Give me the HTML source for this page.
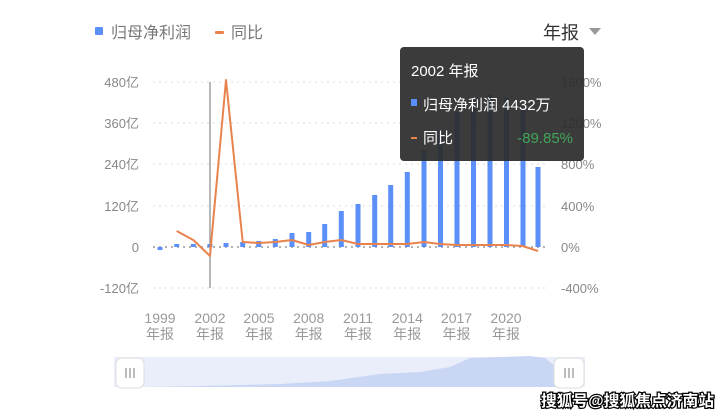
<!DOCTYPE html>
<html><head><meta charset="utf-8"><style>
body{margin:0;width:724px;height:414px;background:#fff;overflow:hidden;font-family:"Liberation Sans","Noto Sans CJK SC",sans-serif;}
svg{position:absolute;left:0;top:0}
</style></head><body>
<svg width="724" height="414" viewBox="0 0 724 414" font-family="Liberation Sans, Noto Sans CJK SC, sans-serif">
<rect x="95" y="27" width="8" height="8" fill="#5b8ff9" rx="1"/>
<text x="111" y="38" font-size="16" fill="#777">归母净利润</text>
<rect x="215" y="31" width="9" height="3" fill="#e8834e" rx="1"/>
<text x="231" y="38" font-size="16" fill="#777">同比</text>
<text x="543" y="39" font-size="18" fill="#333">年报</text>
<path d="M589 28 L601 28 L595 35 Z" fill="#999"/>
<g stroke="#ddd" stroke-dasharray="2,4" stroke-width="1">
<line x1="153" y1="82" x2="548" y2="82"/>
<line x1="153" y1="123" x2="548" y2="123"/>
<line x1="153" y1="164" x2="548" y2="164"/>
<line x1="153" y1="206" x2="548" y2="206"/>
<line x1="153" y1="288" x2="548" y2="288"/>
</g>
<line x1="153" y1="247" x2="548" y2="247" stroke="#999" stroke-dasharray="2,4" stroke-width="1.5"/>
<g font-size="13" fill="#888" text-anchor="end">
<text x="139" y="87">480亿</text><text x="139" y="128">360亿</text><text x="139" y="169">240亿</text>
<text x="139" y="211">120亿</text><text x="139" y="252">0</text><text x="139" y="293">-120亿</text>
</g>
<g font-size="13" fill="#888">
<text x="561" y="87">1600%</text><text x="561" y="128">1200%</text><text x="561" y="169">800%</text>
<text x="561" y="211">400%</text><text x="561" y="252">0%</text><text x="561" y="293">-400%</text>
</g>
<g fill="#5b8ff9">
<rect x="157.5" y="247" width="5" height="3"/>
<rect x="174.2" y="244" width="5" height="3"/>
<rect x="190.8" y="244" width="5" height="3"/>
<rect x="207.5" y="244" width="5" height="3"/>
<rect x="223.5" y="243" width="5" height="4"/>
<rect x="240.2" y="242" width="5" height="5"/>
<rect x="256.2" y="241" width="5" height="6"/>
<rect x="272.8" y="239" width="5" height="8"/>
<rect x="289.5" y="233" width="5" height="14"/>
<rect x="306.2" y="232" width="5" height="15"/>
<rect x="322.2" y="224" width="5" height="23"/>
<rect x="338.8" y="211" width="5" height="36"/>
<rect x="355.5" y="204" width="5" height="43"/>
<rect x="372.2" y="195" width="5" height="52"/>
<rect x="388.2" y="185" width="5" height="62"/>
<rect x="404.8" y="172" width="5" height="75"/>
<rect x="421.5" y="150" width="5" height="97"/>
<rect x="438" y="130" width="5" height="117"/>
<rect x="454.5" y="112" width="5" height="135"/>
<rect x="471" y="100" width="5" height="147"/>
<rect x="487.5" y="95" width="5" height="152"/>
<rect x="504" y="98" width="5" height="149"/>
<rect x="520.5" y="110" width="5" height="137"/>
<rect x="535.5" y="167" width="5" height="80"/>
</g>
<line x1="210" y1="82" x2="210" y2="288" stroke="#888" stroke-width="1.2"/>
<polyline fill="none" stroke="#e8834e" stroke-width="2" stroke-linejoin="round" points="176.7,231 193.3,240 210,256 226,80 242.7,242 258.7,243 275.3,242 292,240 308.7,245 324.7,242 341.3,240 358,244 374.7,244 390.7,244 407.3,244 424,242 440,244 456.5,245 473,245 489.5,245 506,245 522.5,246 538,251"/>
<g font-size="14" fill="#999" text-anchor="middle">
<text x="160" y="323">1999</text><text x="160" y="339">年报</text>
<text x="210" y="323">2002</text><text x="210" y="339">年报</text>
<text x="259" y="323">2005</text><text x="259" y="339">年报</text>
<text x="308.7" y="323">2008</text><text x="308.7" y="339">年报</text>
<text x="358" y="323">2011</text><text x="358" y="339">年报</text>
<text x="407.3" y="323">2014</text><text x="407.3" y="339">年报</text>
<text x="456.5" y="323">2017</text><text x="456.5" y="339">年报</text>
<text x="506" y="323">2020</text><text x="506" y="339">年报</text>
</g>
<rect x="400" y="47" width="184" height="114" rx="4" fill="#2c2c2c" fill-opacity="0.93"/>
<g font-size="15" fill="#fff">
<text x="411" y="76">2002 年报</text>
<rect x="411" y="99" width="6" height="7" fill="#5b8ff9"/>
<text x="423" y="110">归母净利润 4432万</text>
<rect x="411" y="137" width="6" height="2" fill="#e8834e"/>
<text x="423" y="143">同比</text>
<text x="573" y="143" fill="#43a55a" text-anchor="end">-89.85%</text>
</g>
<rect x="114" y="357" width="471" height="30" fill="#e9eefa"/>
<path d="M140 387 L200 386 L280 384 L330 381 L380 374 L420 372 L450 367 L470 358 L500 357 L530 356 L545 358 L560 370 L560 387 Z" fill="#c9d7f4"/>
<rect x="116" y="358" width="28" height="30" rx="6" fill="#fff" stroke="#ddd"/>
<g stroke="#999" stroke-width="1.3"><line x1="126" y1="368" x2="126" y2="378"/><line x1="130" y1="368" x2="130" y2="378"/><line x1="134" y1="368" x2="134" y2="378"/></g>
<rect x="554" y="358" width="30" height="30" rx="6" fill="#fff" stroke="#ddd"/>
<g stroke="#999" stroke-width="1.3"><line x1="565" y1="368" x2="565" y2="378"/><line x1="569" y1="368" x2="569" y2="378"/><line x1="573" y1="368" x2="573" y2="378"/></g>
<text x="541" y="406" font-size="15.5" font-weight="bold" fill="#fff" stroke="#000" stroke-width="2.5" paint-order="stroke" textLength="173" lengthAdjust="spacingAndGlyphs">搜狐号@搜狐焦点济南站</text>
</svg>
</body></html>
